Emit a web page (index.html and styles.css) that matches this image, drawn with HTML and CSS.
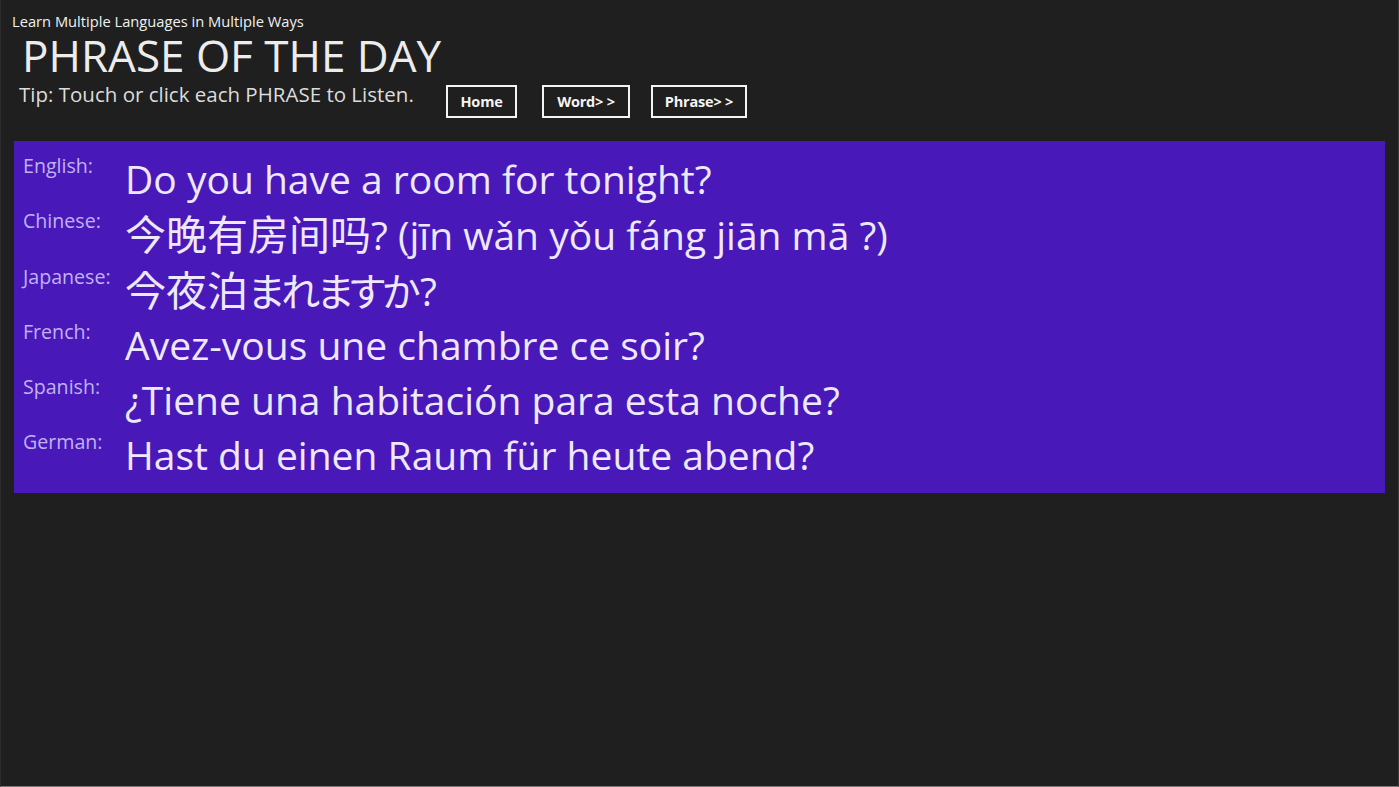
FILE: index.html
```html
<!DOCTYPE html>
<html>
<head>
<meta charset="utf-8">
<link rel="stylesheet" href="styles.css">
</head>
<body>
<div class="frame">
  <div class="app-title">Learn Multiple Languages in Multiple Ways</div>
  <h1 class="page-title">PHRASE OF THE DAY</h1>
  <div class="tip-row">
    <div class="tip">Tip: Touch or click each PHRASE to Listen.</div>
    <div class="buttons">
      <button class="btn btn-home">Home</button>
      <button class="btn btn-word">Word&gt; &gt;</button>
      <button class="btn btn-phrase">Phrase&gt; &gt;</button>
    </div>
  </div>
  <div class="panel">
    <div class="row"><div class="label">English:</div><div class="phrase">Do you have a room for tonight?</div></div>
    <div class="row"><div class="label">Chinese:</div><div class="phrase cjk-sc"><span class="han">今晚有房间吗</span>? (jīn wǎn yǒu fáng jiān mā ?)</div></div>
    <div class="row"><div class="label">Japanese:</div><div class="phrase cjk-jp"><span class="han">今夜泊</span><span class="kana">まれますか</span>?</div></div>
    <div class="row"><div class="label">French:</div><div class="phrase">Avez-vous une chambre ce soir?</div></div>
    <div class="row"><div class="label">Spanish:</div><div class="phrase">¿Tiene una habitación para esta noche?</div></div>
    <div class="row"><div class="label">German:</div><div class="phrase">Hast du einen Raum für heute abend?</div></div>
  </div>
</div>
</body>
</html>
```

FILE: styles.css
```css
html, body {
  margin: 0;
  padding: 0;
  height: 100%;
  background: #1f1f1f;
}
.frame {
  box-sizing: border-box;
  height: 787px;
  width: 1399px;
  border-left: 1px solid #2c2c2c;
  border-right: 1px solid #3a3a3a;
  border-bottom: 1px solid #7a7a7a;
  font-family: "Open Sans", "Noto Sans", sans-serif;
  color: #ececec;
  padding-top: 13px;
}
.app-title {
  font-size: 14.7px;
  line-height: 16px;
  padding-left: 11px;
  color: #f0f0f0;
}
.page-title {
  margin: 5px 0 4px 0;
  font-weight: 400;
  font-size: 44px;
  line-height: 42px;
  padding-left: 21px;
  color: #ececec;
}
.tip-row {
  display: flex;
  align-items: flex-start;
  padding-left: 18px;
}
.tip {
  font-size: 20.5px;
  line-height: 26px;
  color: #dcdcdc;
  width: 427px;
  margin-top: 1px;
}
.buttons {
  display: flex;
  padding-top: 5px;
}
.btn {
  background: transparent;
  border: 2px solid #f4f4f4;
  color: #f4f4f4;
  font-family: "Open Sans", sans-serif;
  font-weight: 700;
  font-size: 14.5px;
  height: 33px;
  padding: 0;
  letter-spacing: -0.2px;
}
.btn-home { width: 71px; }
.btn-word { width: 88px; margin-left: 25px; }
.btn-phrase { width: 96px; margin-left: 21px; }
.panel {
  margin: 23px 13px 0 13px;
  background: #4818b9;
  height: 352px;
  box-sizing: border-box;
  padding: 11px 0 0 9px;
}
.row {
  display: flex;
  height: 55.3px;
}
.label {
  width: 102px;
  flex: none;
  font-size: 19.6px;
  line-height: 28px;
  color: #c2b2f2;
}
.phrase {
  font-size: 39px;
  line-height: 50px;
  color: #eee8ff;
  margin-top: 2px;
  white-space: nowrap;
}
.han { font-size: 41px; }
.kana { letter-spacing: -3px; margin-right: 3px; }
.cjk-sc { font-family: "Open Sans", "Noto Sans CJK SC", sans-serif; }
.cjk-jp { font-family: "Open Sans", "Noto Sans CJK JP", sans-serif; font-feature-settings: "palt" 1; }
```
